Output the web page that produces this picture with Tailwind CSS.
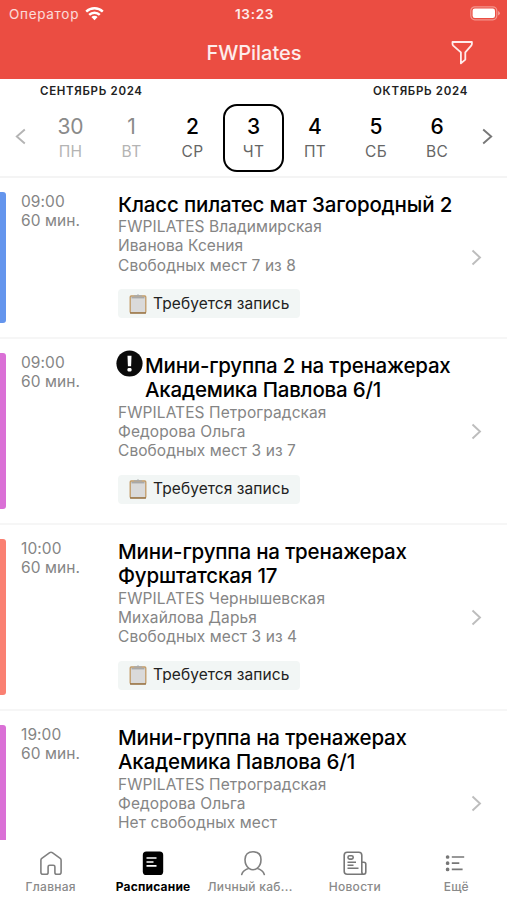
<!DOCTYPE html>
<html lang="ru">
<head>
    <meta charset="UTF-8">
    <meta name="viewport" content="width=device-width, initial-scale=1.0">
    <title>FWPilates</title>
    <script src="https://cdn.jsdelivr.net/npm/@tailwindcss/browser@4"></script>
</head>
<body class="bg-white font-['Inter',sans-serif]">
<div class="w-[507px] h-[900px] overflow-hidden flex flex-col">
    <!-- Header -->
    <header class="h-[79px] shrink-0 bg-[#eb4d42] text-white">
        <div class="h-7 pl-[9px] pr-[7px] grid grid-cols-3 items-center text-[13.5px]">
            <div class="flex items-center gap-1.5 text-white/80 tracking-[0.7px]">
                <span>Оператор</span>
                <svg class="w-[19px] h-[15px] -mt-0.5" viewBox="0 0 19 15" fill="none" stroke="#fff" stroke-width="2.4">
                    <path d="M1.2 5.6a11.8 11.8 0 0 1 16.6 0"/>
                    <path d="M4.2 8.9a7.5 7.5 0 0 1 10.6 0"/>
                    <path d="M9.5 14.2 6.4 11a4.4 4.4 0 0 1 6.2 0z" fill="#fff" stroke="none"/>
                </svg>
            </div>
            <div class="text-center font-semibold text-white/90 tracking-[0.7px]">13:23</div>
            <svg class="justify-self-end w-[30px] h-[15px] -mt-0.5" viewBox="0 0 30 15">
                <rect x="0.8" y="0.8" width="26" height="13" rx="4" fill="none" stroke="#fff" stroke-opacity=".4" stroke-width="1.2"/>
                <rect x="2.6" y="2.6" width="22.4" height="9.4" rx="2.2" fill="#fff"/>
                <path d="M28.2 5v4.6q1.6-.8 1.6-2.3T28.2 5z" fill="#fff" fill-opacity=".5"/>
            </svg>
        </div>
        <div class="h-[50px] pr-[33px] grid grid-cols-[1fr_auto_1fr] items-center">
            <h1 class="col-start-2 ml-[34px] text-[20px] font-medium text-white/90 tracking-[-0.05px]">FWPilates</h1>
            <svg class="justify-self-end w-[23px] h-[25px] -mt-0.5" viewBox="0 0 23 25" fill="none" stroke="#ffeceb" stroke-width="1.8" stroke-linejoin="round">
                <path d="M1.500 2h19.400v1.800q0 1-.7 1.800l-5.900 6.800v7.200l-4.400 3.800v-11L2.200 5.600q-.7-.8-.7-1.800z"/>
            </svg>
        </div>
    </header>

    <!-- Week strip -->
    <section class="h-[99px] shrink-0 border-b-2 border-[#f4f4f4]">
        <div class="h-[25px] pt-px pl-10 pr-[39px] flex justify-between items-center text-[11.5px] font-semibold text-[#222] tracking-[0.68px]">
            <span>СЕНТЯБРЬ 2024</span>
            <span>ОКТЯБРЬ 2024</span>
        </div>
        <div class="flex items-center h-[68px]">
            <div class="w-10 flex justify-center -mt-[3px]">
                <svg class="w-[11px] h-[17px]" viewBox="0 0 11 17" fill="none" stroke="#b4b4b4" stroke-width="1.9"><path d="M9.800 1.500 1.800 8.500l8 7"/></svg>
            </div>
            <div class="flex-1 grid grid-cols-7 h-full text-center text-[21px] font-medium leading-[25px]">
                <div class="pt-[10px] text-[#8a8a8a] font-normal">30<p class="text-[15.5px] text-[#b4b4b4] tracking-[0.3px]">ПН</p></div>
                <div class="pt-[10px] text-[#8a8a8a] font-normal">1<p class="text-[15.5px] text-[#b4b4b4] tracking-[0.3px]">ВТ</p></div>
                <div class="pt-[10px]">2<p class="text-[15.5px] font-normal text-[#666] tracking-[0.3px]">СР</p></div>
                <div class="pt-[8px] border-2 border-black rounded-[14px]">3<p class="text-[15.5px] font-normal text-[#666] tracking-[0.3px]">ЧТ</p></div>
                <div class="pt-[10px] pl-px">4<p class="text-[15.5px] font-normal text-[#666] tracking-[0.3px]">ПТ</p></div>
                <div class="pt-[10px] pl-px">5<p class="text-[15.5px] font-normal text-[#666] tracking-[0.3px]">СБ</p></div>
                <div class="pt-[10px] pl-px">6<p class="text-[15.5px] font-normal text-[#666] tracking-[0.3px]">ВС</p></div>
            </div>
            <div class="w-10 flex justify-center -mt-[3px]">
                <svg class="w-[11px] h-[17px]" viewBox="0 0 11 17" fill="none" stroke="#777" stroke-width="1.9"><path d="m1.200 1.500 8 7-8 7"/></svg>
            </div>
        </div>
    </section>

    <!-- Classes -->
    <main class="flex-1 min-h-0 overflow-hidden text-[15.5px] leading-[19.2px] text-[#858585] tracking-[0.08px] whitespace-nowrap">
        <article class="h-[161px] py-[14px] flex border-b-2 border-[#f6f6f6]">
            <div class="w-[6px] rounded-r-[3px] bg-[#6495ed]"></div>
            <div class="w-[112px] pl-[15px]"><p>09:00</p><p>60 мин.</p></div>
            <div class="flex-1">
                <h2 class="pt-[0.6px] text-[20.5px] leading-[24.5px] font-medium text-black tracking-[-0.16px]">Класс пилатес мат Загородный 2</h2>
                <p>FWPILATES Владимирская</p>
                <p>Иванова Ксения</p>
                <p>Свободных мест 7 из 8</p>
                <div class="mt-[14.4px] w-[182px] h-[29px] rounded-[4px] bg-[#f2f6f5] pl-[11px] flex items-center gap-[6px] text-[#222]">
                    <svg class="w-[18px] h-[20px]" viewBox="0 0 18 20"><rect x="1.200" y="2" width="15.600" height="16.800" rx="1" fill="#dadada" stroke="#c19a66" stroke-width="1.300"/><path d="M1 19h16" stroke="#8d6a3f" stroke-width="1.200"/><path d="M2.500 2.800h13v1.600h-13z" fill="#a8a8a8"/><path d="M5 2.500h8V1.300h-2.500L9 .2 7.500 1.300H5z" fill="#aaa"/></svg>
                    <span>Требуется запись</span>
                </div>
            </div>
            <div class="w-[36px] flex items-center"><svg class="w-[11px] h-[17px]" viewBox="0 0 11 17" fill="none" stroke="#bdbdbd" stroke-width="1.9"><path d="m1.500 1.500 7.500 7-7.500 7"/></svg></div>
        </article>

        <article class="h-[186px] py-[14px] flex border-b-2 border-[#f6f6f6]">
            <div class="w-[6px] rounded-r-[3px] bg-[#da70d6]"></div>
            <div class="w-[112px] pl-[15px]"><p>09:00</p><p>60 мин.</p></div>
            <div class="flex-1">
                <div class="flex">
                    <svg class="w-[27px] h-[27px] -ml-[2px] -mt-[3px] mr-[2px]" viewBox="0 0 27 27"><circle cx="13.500" cy="13.500" r="13.100" fill="#0a0a0a"/><path d="M11.500 5.800h4l-.4 10.400h-3.200z" fill="#fff"/><rect x="11.500" y="18" width="4" height="3.400" rx="1.200" fill="#fff"/></svg>
                    <h2 class="pt-[0.6px] text-[20.5px] leading-[24.5px] font-medium text-black tracking-[-0.2px]">Мини-группа 2 на тренажерах<br>Академика Павлова 6/1</h2>
                </div>
                <p>FWPILATES Петроградская</p>
                <p>Федорова Ольга</p>
                <p>Свободных мест 3 из 7</p>
                <div class="mt-[14.4px] w-[182px] h-[29px] rounded-[4px] bg-[#f2f6f5] pl-[11px] flex items-center gap-[6px] text-[#222]">
                    <svg class="w-[18px] h-[20px]" viewBox="0 0 18 20"><rect x="1.200" y="2" width="15.600" height="16.800" rx="1" fill="#dadada" stroke="#c19a66" stroke-width="1.300"/><path d="M1 19h16" stroke="#8d6a3f" stroke-width="1.200"/><path d="M2.500 2.800h13v1.600h-13z" fill="#a8a8a8"/><path d="M5 2.500h8V1.300h-2.500L9 .2 7.500 1.300H5z" fill="#aaa"/></svg>
                    <span>Требуется запись</span>
                </div>
            </div>
            <div class="w-[36px] flex items-center"><svg class="w-[11px] h-[17px]" viewBox="0 0 11 17" fill="none" stroke="#bdbdbd" stroke-width="1.9"><path d="m1.500 1.500 7.500 7-7.500 7"/></svg></div>
        </article>

        <article class="h-[186px] py-[14px] flex border-b-2 border-[#f6f6f6]">
            <div class="w-[6px] rounded-r-[3px] bg-[#fa8072]"></div>
            <div class="w-[112px] pl-[15px]"><p>10:00</p><p>60 мин.</p></div>
            <div class="flex-1">
                <h2 class="pt-[0.6px] text-[20.5px] leading-[24.5px] font-medium text-black tracking-[-0.16px]">Мини-группа на тренажерах<br>Фурштатская 17</h2>
                <p>FWPILATES Чернышевская</p>
                <p>Михайлова Дарья</p>
                <p>Свободных мест 3 из 4</p>
                <div class="mt-[14.4px] w-[182px] h-[29px] rounded-[4px] bg-[#f2f6f5] pl-[11px] flex items-center gap-[6px] text-[#222]">
                    <svg class="w-[18px] h-[20px]" viewBox="0 0 18 20"><rect x="1.200" y="2" width="15.600" height="16.800" rx="1" fill="#dadada" stroke="#c19a66" stroke-width="1.300"/><path d="M1 19h16" stroke="#8d6a3f" stroke-width="1.200"/><path d="M2.500 2.800h13v1.600h-13z" fill="#a8a8a8"/><path d="M5 2.500h8V1.300h-2.500L9 .2 7.500 1.300H5z" fill="#aaa"/></svg>
                    <span>Требуется запись</span>
                </div>
            </div>
            <div class="w-[36px] flex items-center"><svg class="w-[11px] h-[17px]" viewBox="0 0 11 17" fill="none" stroke="#bdbdbd" stroke-width="1.9"><path d="m1.500 1.500 7.500 7-7.500 7"/></svg></div>
        </article>

        <article class="h-[184px] py-[14px] flex">
            <div class="w-[6px] rounded-r-[3px] bg-[#da70d6]"></div>
            <div class="w-[112px] pl-[15px]"><p>19:00</p><p>60 мин.</p></div>
            <div class="flex-1">
                <h2 class="pt-[0.6px] text-[20.5px] leading-[24.5px] font-medium text-black tracking-[-0.16px]">Мини-группа на тренажерах<br>Академика Павлова 6/1</h2>
                <p>FWPILATES Петроградская</p>
                <p>Федорова Ольга</p>
                <p>Нет свободных мест</p>
            </div>
            <div class="w-[36px] flex items-center"><svg class="w-[11px] h-[17px]" viewBox="0 0 11 17" fill="none" stroke="#bdbdbd" stroke-width="1.9"><path d="m1.500 1.500 7.500 7-7.500 7"/></svg></div>
        </article>
    </main>

    <!-- Tab bar -->
    <nav class="h-[60px] shrink-0 pt-[10px] grid grid-cols-5 text-center text-[12px] leading-[18px] font-medium text-[#8a8a8a] tracking-[0.28px] whitespace-nowrap">
        <div class="flex flex-col items-center gap-[2px]">
            <svg class="w-[26px] h-[26px]" viewBox="0 0 26 26" fill="none" stroke="#808080" stroke-width="1.600" stroke-linejoin="round"><path d="M2.900 10.200q0-1.100.9-1.800l7.900-5.700q1.300-.9 2.600 0l7.900 5.700q.9.700.9 1.800v12q0 2-2 2h-2.400q-1.800 0-1.800-1.800v-5.600q0-1.600-1.600-1.600h-3.600q-1.600 0-1.600 1.600v5.600q0 1.800-1.800 1.800H4.900q-2 0-2-2z"/></svg>
            <span>Главная</span>
        </div>
        <div class="flex flex-col items-center gap-[2px] pl-[2px] text-black font-bold">
            <svg class="w-[26px] h-[26px]" viewBox="0 0 26 26"><rect x="2.800" y="1.500" width="20.400" height="23.500" rx="3.600"/><path d="M6.500 8h10M6.500 12h7M6.500 15.800h10" stroke="#fff" stroke-width="1.700"/></svg>
            <span class="tracking-[0.2px]">Расписание</span>
        </div>
        <div class="flex flex-col items-center gap-[2px]">
            <svg class="w-[26px] h-[26px]" viewBox="0 0 26 26" fill="none" stroke="#808080" stroke-width="1.600" stroke-linecap="round"><path d="M9 18.300C6.400 16.500 5 13.500 5 9.500 5 4.500 8 1.800 13 1.800s8 2.700 8 7.700c0 4-1.400 7-4 8.800-2.400 1.700-5.600 1.700-8 0zM9 18.300c-3.800 1.200-6.300 2.900-7.300 6.200M17 18.300c3.800 1.200 6.300 2.900 7.300 6.200"/></svg>
            <span class="mr-[7px]">Личный каб...</span>
        </div>
        <div class="flex flex-col items-center gap-[2px]">
            <svg class="w-[26px] h-[26px]" viewBox="0 0 26 26" fill="none" stroke="#777" stroke-width="1.600"><path d="M20.800 24.200H5.200q-3 0-3-3V5.200q0-3 3-3h11.600q3 0 3 3v16.500q0 2.500 2 2.500t2-2.500V14q0-1.800-2-1.800h-2"/><rect x="6" y="5.700" width="5.200" height="3.400" rx="1.600"/><path d="M5.500 12.300h8.500M5.500 15.300h6M5.500 18.300h11"/></svg>
            <span>Новости</span>
        </div>
        <div class="flex flex-col items-center gap-[2px]">
            <svg class="w-[26px] h-[26px]" viewBox="0 0 26 26" fill="#777" stroke="#777" stroke-width="1.700"><circle cx="4.600" cy="7" r="1"/><circle cx="4.600" cy="13.200" r="1"/><circle cx="4.600" cy="19.400" r="1"/><path d="M8.800 7h12.400M8.800 13.200h7.500M8.800 19.400h10.800"/></svg>
            <span>Ещё</span>
        </div>
    </nav>
</div>
</body>
</html>
